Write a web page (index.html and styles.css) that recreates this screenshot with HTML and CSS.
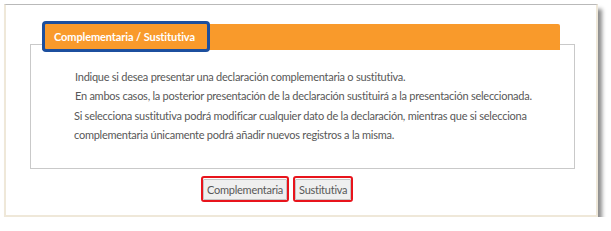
FILE: index.html
```html
<!DOCTYPE html>
<html lang="es">

<head>
    <meta charset="UTF-8">
    <meta name="viewport" content="width=device-width, initial-scale=1.0">
    <title>Complementaria / Sustitutiva</title>
    <link rel="stylesheet" href="styles.css">
</head>

<body>
    <div class="frame">
        <div class="panel">
            <div class="panel-head">
                <div class="tab">Complementaria / Sustitutiva</div>
            </div>
            <div class="panel-body">
                <p>Indique si desea presentar una declaración complementaria o sustitutiva.</p>
                <p>En ambos casos, la posterior presentación de la declaración sustituirá a la presentación seleccionada.</p>
                <p class="note">Si selecciona sustitutiva podrá modificar cualquier dato de la declaración, mientras que si selecciona complementaria únicamente podrá añadir nuevos registros a la misma.</p>
            </div>
        </div>
        <div class="btn-wrap">
            <div class="btn">
                <button>Complementaria</button>
            </div>
            <div class="btn">
                <button>Sustitutiva</button>
            </div>
        </div>
    </div>
</body>

</html>
```

FILE: styles.css
```css
body,
html {
    padding: 0;
    margin: 0;
    background: #fff;
    font-family: Lato, "Open Sans", sans-serif;
}

.frame {
    margin: 4px 0 0 4px;
    width: 594px;
    height: 213px;
    box-sizing: border-box;
    border: 2px solid #efe8d9;
    border-top: 1px solid #b9b9b9;
    background: #fff;
    box-shadow: 4px 5px 4px rgba(0, 0, 0, 0.45);
}

.panel {
    margin: 39px 0 0 24px;
    width: 545px;
    box-sizing: border-box;
    border: 1px solid #c9c9c9;
}

.panel-head {
    display: flex;
    margin: -21px 0 0 11px;
    width: 518px;
    height: 26px;
    background: #f99a2b;
    border-radius: 2px 2px 0 0;
}

.tab {
    margin-top: -3px;
    width: 168px;
    height: 31px;
    box-sizing: border-box;
    border: 3px solid #1c4f9e;
    border-radius: 4px;
    padding-left: 9px;
    line-height: 25px;
    color: #fff;
    font-size: 11px;
    font-weight: bold;
    letter-spacing: -0.1px;
}

.panel-body {
    padding: 17px 20px 24px 44px;
    color: #585858;
    font-size: 11px;
    letter-spacing: -0.25px;
    line-height: 19px;
}

.panel-body p {
    margin: 0;
}

.panel-body .note {
    margin-top: 1px;
    margin-left: -1px;
    padding-right: 18px;
}

.btn-wrap {
    display: flex;
    gap: 4px;
    margin: 7px 0 0 195px;
}

.btn {
    border: 2px solid #e8141c;
    border-radius: 3px;
}

.btn button {
    height: 21px;
    margin: 0;
    padding: 0 3px;
    border: 1px solid #c4c4c4;
    border-radius: 1px;
    background: #efefef;
    color: #585858;
    font-family: Lato, "Open Sans", sans-serif;
    font-size: 11px;
    letter-spacing: -0.25px;
}
```
